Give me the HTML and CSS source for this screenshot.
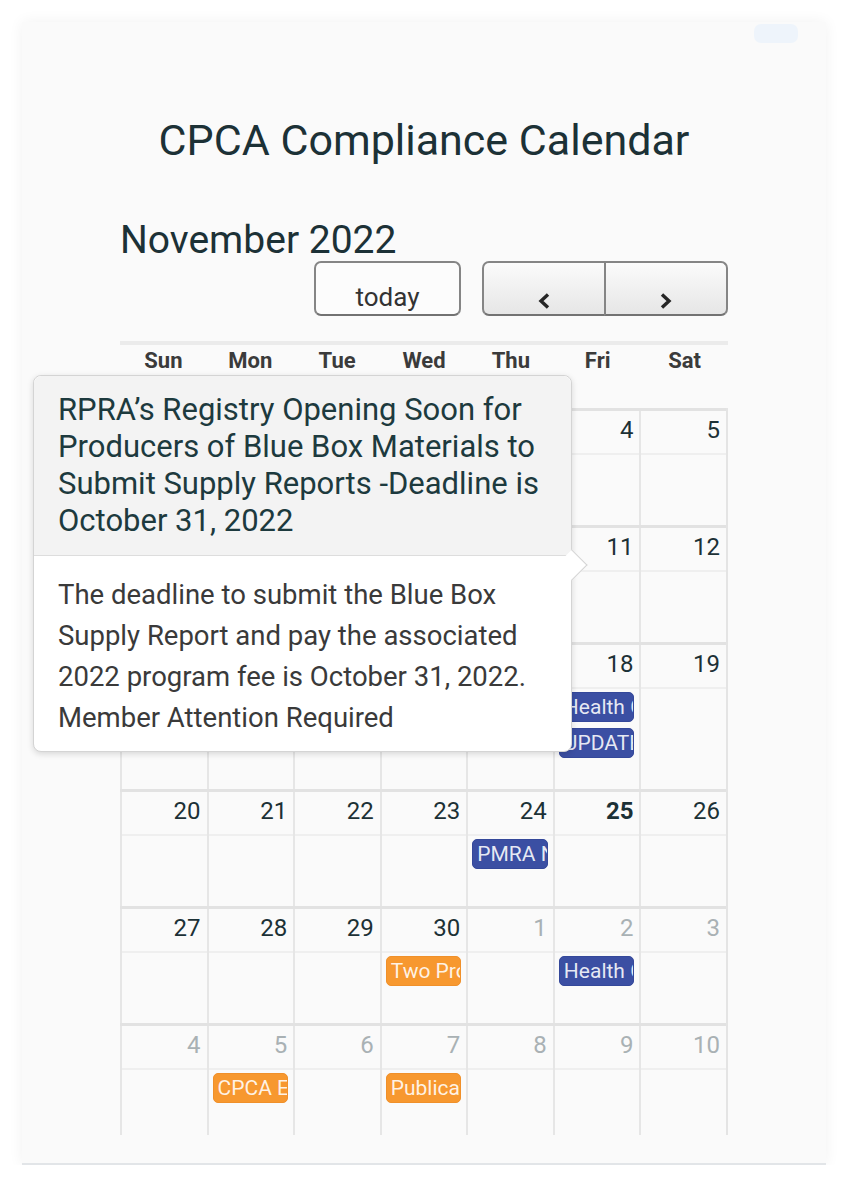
FILE: index.html
```html
<!DOCTYPE html>
<html lang="en">
<head>
    <meta charset="UTF-8">
    <meta name="viewport" content="width=device-width, initial-scale=1.0">
    <title>CPCA Compliance Calendar</title>
    <link rel="stylesheet" href="styles.css">
</head>
<body>
    <div class="card">
        <div class="topbar"><span class="pill"></span></div>

        <h1 class="page-title">CPCA Compliance Calendar</h1>

        <div class="calendar">
            <div class="toolbar">
                <h2 class="month-title">November 2022</h2>
                <div class="toolbar-buttons">
                    <button class="btn btn-today">today</button>
                    <div class="btn-group">
                        <button class="btn btn-nav btn-prev" aria-label="prev">
                            <svg width="14" height="18" viewBox="0 0 14 18"><polyline points="11,2.5 4,9 11,15.5" fill="none" stroke="#262626" stroke-width="3.4"/></svg>
                        </button>
                        <button class="btn btn-nav btn-next" aria-label="next">
                            <svg width="14" height="18" viewBox="0 0 14 18"><polyline points="3,2.5 10,9 3,15.5" fill="none" stroke="#262626" stroke-width="3.4"/></svg>
                        </button>
                    </div>
                </div>
            </div>

            <div class="grid">
                <div class="day-names">
                    <div>Sun</div><div>Mon</div><div>Tue</div><div>Wed</div><div>Thu</div><div>Fri</div><div>Sat</div>
                </div>

                <div class="weeks">
                    <div class="week">
                        <div class="day other"><div class="day-num">30</div><div class="day-events"></div></div>
                        <div class="day other"><div class="day-num">31</div><div class="day-events"></div></div>
                        <div class="day"><div class="day-num">1</div><div class="day-events"></div></div>
                        <div class="day"><div class="day-num">2</div><div class="day-events"></div></div>
                        <div class="day"><div class="day-num">3</div><div class="day-events"></div></div>
                        <div class="day"><div class="day-num">4</div><div class="day-events"></div></div>
                        <div class="day"><div class="day-num">5</div><div class="day-events"></div></div>
                    </div>
                    <div class="week">
                        <div class="day"><div class="day-num">6</div><div class="day-events"></div></div>
                        <div class="day"><div class="day-num">7</div><div class="day-events"></div></div>
                        <div class="day"><div class="day-num">8</div><div class="day-events"></div></div>
                        <div class="day"><div class="day-num">9</div><div class="day-events"></div></div>
                        <div class="day"><div class="day-num">10</div><div class="day-events"></div></div>
                        <div class="day"><div class="day-num">11</div><div class="day-events"></div></div>
                        <div class="day"><div class="day-num">12</div><div class="day-events"></div></div>
                    </div>
                    <div class="week">
                        <div class="day"><div class="day-num">13</div><div class="day-events"></div></div>
                        <div class="day"><div class="day-num">14</div><div class="day-events"></div></div>
                        <div class="day"><div class="day-num">15</div><div class="day-events"></div></div>
                        <div class="day"><div class="day-num">16</div><div class="day-events"></div></div>
                        <div class="day"><div class="day-num">17</div><div class="day-events"></div></div>
                        <div class="day">
                            <div class="day-num">18</div>
                            <div class="day-events">
                                <div class="event blue">Health Canada</div>
                                <div class="event blue">UPDATE</div>
                            </div>
                        </div>
                        <div class="day"><div class="day-num">19</div><div class="day-events"></div></div>
                    </div>
                    <div class="week">
                        <div class="day"><div class="day-num">20</div><div class="day-events"></div></div>
                        <div class="day"><div class="day-num">21</div><div class="day-events"></div></div>
                        <div class="day"><div class="day-num">22</div><div class="day-events"></div></div>
                        <div class="day"><div class="day-num">23</div><div class="day-events"></div></div>
                        <div class="day">
                            <div class="day-num">24</div>
                            <div class="day-events"><div class="event blue">PMRA Notice</div></div>
                        </div>
                        <div class="day today"><div class="day-num">25</div><div class="day-events"></div></div>
                        <div class="day"><div class="day-num">26</div><div class="day-events"></div></div>
                    </div>
                    <div class="week">
                        <div class="day"><div class="day-num">27</div><div class="day-events"></div></div>
                        <div class="day"><div class="day-num">28</div><div class="day-events"></div></div>
                        <div class="day"><div class="day-num">29</div><div class="day-events"></div></div>
                        <div class="day">
                            <div class="day-num">30</div>
                            <div class="day-events"><div class="event orange">Two Proposals</div></div>
                        </div>
                        <div class="day other"><div class="day-num">1</div><div class="day-events"></div></div>
                        <div class="day other">
                            <div class="day-num">2</div>
                            <div class="day-events"><div class="event blue">Health Canada</div></div>
                        </div>
                        <div class="day other"><div class="day-num">3</div><div class="day-events"></div></div>
                    </div>
                    <div class="week">
                        <div class="day other"><div class="day-num">4</div><div class="day-events"></div></div>
                        <div class="day other">
                            <div class="day-num">5</div>
                            <div class="day-events"><div class="event orange">CPCA Event</div></div>
                        </div>
                        <div class="day other"><div class="day-num">6</div><div class="day-events"></div></div>
                        <div class="day other">
                            <div class="day-num">7</div>
                            <div class="day-events"><div class="event orange">Publication</div></div>
                        </div>
                        <div class="day other"><div class="day-num">8</div><div class="day-events"></div></div>
                        <div class="day other"><div class="day-num">9</div><div class="day-events"></div></div>
                        <div class="day other"><div class="day-num">10</div><div class="day-events"></div></div>
                    </div>
                </div>
            </div>
        </div>

        <div class="popover">
            <div class="popover-header">RPRA’s Registry Opening Soon for Producers of Blue Box Materials to Submit Supply Reports -Deadline is October 31, 2022</div>
            <div class="popover-body">The deadline to submit the Blue Box Supply Report and pay the associated 2022 program fee is October 31, 2022. Member Attention Required</div>
            <span class="popover-arrow"></span>
        </div>
    </div>
</body>
</html>
```

FILE: styles.css
```css
body {
    margin: 0;
    background-color: #ffffff;
    font-family: 'Roboto', 'Liberation Sans', Arial, sans-serif;
    color: #1c3136;
}

.card {
    position: relative;
    margin: 22px 22px 0 22px;
    padding: 2px 0 28px;
    background-color: #fafafa;
    border-bottom: 2px solid #e2e5e8;
    box-shadow: 0 0 14px rgba(0, 0, 0, 0.06);
}

.topbar {
    display: flex;
    justify-content: flex-end;
    padding-right: 28px;
}

.pill {
    display: block;
    width: 44px;
    height: 19px;
    border-radius: 7px;
    background-color: #eef4fb;
}

.page-title {
    margin: 72px 0 0;
    font-size: 43px;
    line-height: 50px;
    font-weight: 400;
    text-align: center;
}

.calendar {
    width: 608px;
    margin: 53px auto 0;
}

.month-title {
    margin: 0;
    font-size: 39px;
    line-height: 44px;
    font-weight: 400;
}

.toolbar-buttons {
    display: flex;
    justify-content: flex-end;
    gap: 21px;
    margin-top: -1px;
}

.btn {
    display: flex;
    align-items: flex-end;
    justify-content: center;
    box-sizing: border-box;
    height: 55px;
    margin: 0;
    padding: 0 0 2px;
    border: 2px solid #858585;
    border-bottom-color: #727272;
    border-radius: 7px;
    background: linear-gradient(#fbfbfb, #e6e6e6);
    font-family: inherit;
    font-size: 26px;
    color: #333333;
}

.btn-today {
    width: 147px;
    background: #fcfcfc;
}

.btn-group {
    display: flex;
}

.btn-nav {
    width: 124px;
    padding-bottom: 4px;
}

.btn-prev {
    border-top-right-radius: 0;
    border-bottom-right-radius: 0;
}

.btn-next {
    margin-left: -2px;
    border-top-left-radius: 0;
    border-bottom-left-radius: 0;
}

.grid {
    margin-top: 25px;
    border-top: 4px solid #ebebeb;
}

.day-names {
    display: grid;
    grid-template-columns: repeat(7, 1fr);
    height: 63px;
    font-size: 22px;
    line-height: 24px;
    font-weight: 700;
    color: #3b3b3b;
    text-align: center;
}

.day-names div {
    padding-top: 4px;
}

.weeks {
    height: 727px;
    overflow: hidden;
    border-right: 2px solid #e4e4e4;
}

.week {
    display: grid;
    grid-template-columns: repeat(7, 1fr);
    border-top: 3px solid #e2e2e2;
}

.day {
    min-width: 0;
    border-left: 2px solid #e6e6e6;
}

.day-num {
    height: 44px;
    padding: 5px 6px 0 0;
    box-sizing: border-box;
    border-bottom: 2px solid #efefef;
    font-size: 24px;
    line-height: 28px;
    text-align: right;
}

.day.other .day-num {
    color: #a9b1b4;
}

.day.today .day-num {
    font-weight: 700;
}

.day-events {
    display: flex;
    flex-direction: column;
    gap: 6px;
    min-height: 70px;
    box-sizing: border-box;
    padding: 3px 5px 31px 4px;
}

.event {
    height: 30px;
    box-sizing: border-box;
    padding: 0 4px;
    border-radius: 5px;
    font-size: 21px;
    line-height: 28px;
    color: rgba(255, 255, 255, 0.88);
    white-space: nowrap;
    overflow: hidden;
}

.event.blue {
    background-color: #3b4fa3;
    border: 1px solid #34489a;
}

.event.orange {
    background-color: #f7982f;
    border: 1px solid #f0902a;
}

.popover {
    position: absolute;
    left: 11px;
    top: 353px;
    width: 539px;
    box-sizing: border-box;
    border: 1px solid #d4d4d4;
    border-radius: 8px;
    background-color: #ffffff;
    box-shadow: 0 2px 6px rgba(0, 0, 0, 0.14);
}

.popover-header {
    padding: 15px 18px 16px 24px;
    border-bottom: 1px solid #dddddd;
    border-radius: 8px 8px 0 0;
    background-color: #f3f3f3;
    font-size: 31px;
    line-height: 37px;
    color: #1d3a3e;
}

.popover-body {
    padding: 18px 18px 13px 24px;
    font-size: 27.5px;
    line-height: 41px;
    color: #3a3a3a;
}

.popover-arrow {
    position: absolute;
    right: -12px;
    top: 178px;
    width: 22px;
    height: 22px;
    box-sizing: border-box;
    background-color: #ffffff;
    border-top: 1px solid #d4d4d4;
    border-right: 1px solid #d4d4d4;
    transform: rotate(45deg);
}
```
